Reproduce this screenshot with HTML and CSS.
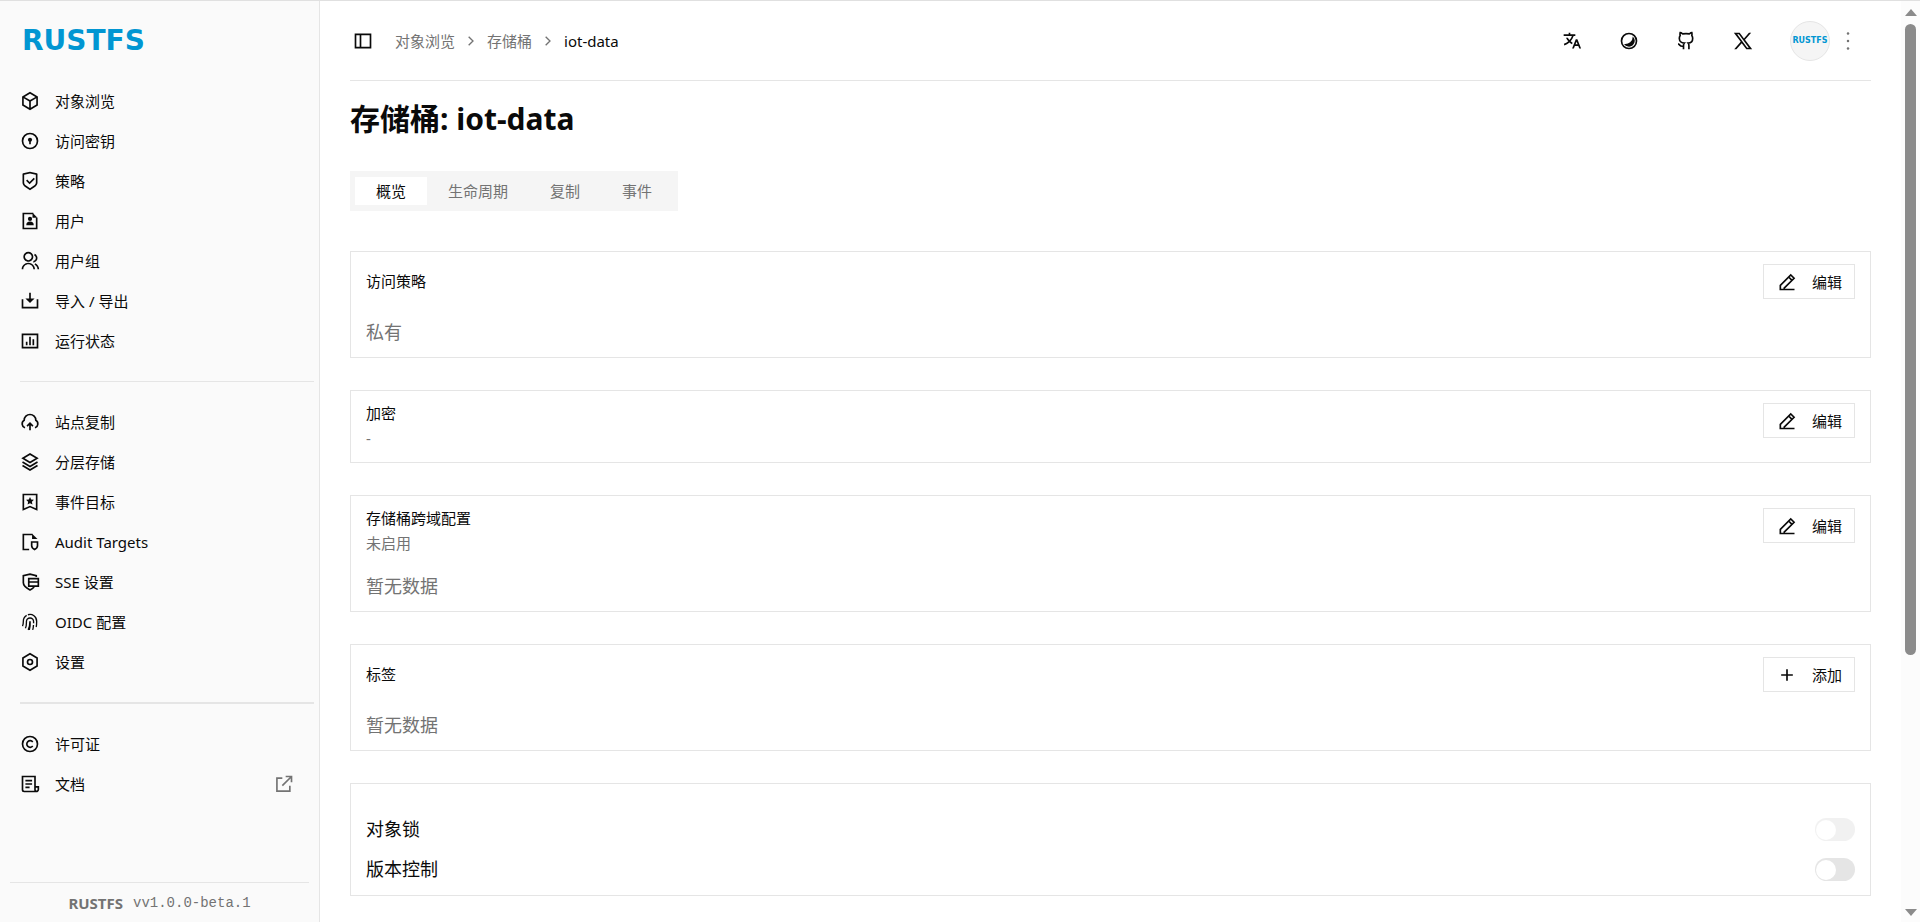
FILE: index.html
```html
<!DOCTYPE html>
<html lang="zh-CN">

<head>
    <meta charset="UTF-8">
    <meta name="viewport" content="width=device-width, initial-scale=1.0">
    <title>RustFS</title>
    <link rel="stylesheet" href="styles.css">
</head>

<body>
    <div class="app">
        <aside class="sidebar">
            <a class="logo" href="#">RUSTFS</a>

            <nav class="nav">
                <a class="nav-item" href="#">
                    <svg class="icon" viewBox="0 0 24 24"><path d="M12 1L21.5 6.5V17.5L12 23L2.5 17.5V6.5L12 1ZM5.494 7.078L12 10.844L18.506 7.078L12 3.311L5.494 7.078ZM4.5 8.813V16.347L11 20.11V12.577L4.5 8.813ZM13 20.11L19.5 16.347V8.813L13 12.577V20.11Z"/></svg>
                    对象浏览
                </a>
                <a class="nav-item" href="#">
                    <svg class="icon" viewBox="0 0 24 24"><circle class="line" cx="12" cy="12" r="9"/><circle cx="12" cy="10.5" r="2.5"/><path d="M11 11h2v5h-2Z"/></svg>
                    访问密钥
                </a>
                <a class="nav-item" href="#">
                    <svg class="icon" viewBox="0 0 24 24"><path d="M12 1L20.217 2.826C20.675 2.928 21 3.333 21 3.802V13.789C21 15.795 19.997 17.668 18.328 18.781L12 23L5.672 18.781C4.003 17.668 3 15.795 3 13.789V3.802C3 3.333 3.326 2.928 3.783 2.826L12 1ZM12 3.049L5 4.604V13.789C5 15.126 5.668 16.375 6.781 17.117L12 20.596L17.219 17.117C18.332 16.375 19 15.126 19 13.789V4.604L12 3.049ZM16.452 8.222L17.867 9.636L11.503 16L7.26 11.757L8.674 10.343L11.502 13.171L16.452 8.222Z"/></svg>
                    策略
                </a>
                <a class="nav-item" href="#">
                    <svg class="icon" viewBox="0 0 24 24"><path class="line" d="M16 3H4v18h16V8"/><path d="M15 2l6 6h-6Z"/><circle cx="12" cy="9.5" r="2.5"/><path d="M7.5 17a4.500 4.500 0 0 1 9 0Z"/></svg>
                    用户
                </a>
                <a class="nav-item" href="#">
                    <svg class="icon" viewBox="0 0 24 24"><path d="M2 22C2 17.582 5.582 14 10 14C14.418 14 18 17.582 18 22H16C16 18.686 13.314 16 10 16C6.686 16 4 18.686 4 22H2ZM10 13C6.685 13 4 10.315 4 7C4 3.685 6.685 1 10 1C13.315 1 16 3.685 16 7C16 10.315 13.315 13 10 13ZM10 11C12.21 11 14 9.21 14 7C14 4.79 12.21 3 10 3C7.79 3 6 4.79 6 7C6 9.21 7.79 11 10 11ZM18.284 14.703C21.064 15.956 23 18.752 23 22H21C21 19.564 19.548 17.467 17.463 16.527L18.284 14.703ZM17.596 3.413C19.594 4.237 21 6.204 21 8.5C21 11.37 18.804 13.725 16 13.978V11.965C17.697 11.722 19 10.264 19 8.5C19 7.119 18.202 5.926 17.041 5.356L17.596 3.413Z"/></svg>
                    用户组
                </a>
                <a class="nav-item" href="#">
                    <svg class="icon" viewBox="0 0 24 24"><path class="line" d="M3 10v10h18V10M12 2v9"/><path d="M6.500 9h11L12 14.500Z"/></svg>
                    导入 / 导出
                </a>
                <a class="nav-item" href="#">
                    <svg class="icon" viewBox="0 0 24 24"><path class="line" d="M3 4h18v16H3ZM8 13v4M12 7v10M16 10v7"/></svg>
                    运行状态
                </a>

                <hr class="nav-divider">

                <a class="nav-item" href="#">
                    <svg class="icon" viewBox="0 0 24 24"><path class="line" d="M6 19a5 5 0 0 1-1-9a7 7 0 0 1 14 0a5 5 0 0 1-1 9M12 22v-8M8.5 17L12 13.500L15.500 17"/></svg>
                    站点复制
                </a>
                <a class="nav-item" href="#">
                    <svg class="icon" viewBox="0 0 24 24"><path class="line" d="M12 2.500L20.500 7.500L12 12.500L3.500 7.500ZM3 12l9 5.300l9-5.300M3 16.300l9 5.300l9-5.300"/></svg>
                    分层存储
                </a>
                <a class="nav-item" href="#">
                    <svg class="icon" viewBox="0 0 24 24"><path class="line" d="M4 3h16v18L12 17.500L4 21Z"/><path d="M12 6l1.400 3l3.300.4l-2.400 2.300l.6 3.300L12 13.400L9.100 15l.6-3.300L7.300 9.400l3.300-.4Z"/></svg>
                    事件目标
                </a>
                <a class="nav-item" href="#">
                    <svg class="icon" viewBox="0 0 24 24"><path class="line" d="M15 3H4v18h7M14 12h7v4.500c0 2.300-1.500 3.500-3.500 4.500c-2-1-3.500-2.200-3.500-4.500Z"/><path d="M14.500 2l6.500 6.500h-6.500Z"/></svg>
                    Audit Targets
                </a>
                <a class="nav-item" href="#">
                    <svg class="icon" viewBox="0 0 24 24"><path class="line" d="M19.500 6V4.500L12 2.500L4 4.500V13c0 4 3 6 8 8.500c2-1 3.500-2 5-3.500"/><path class="line" d="M10.500 8H22v9H10.500ZM10.500 12H22"/></svg>
                    SSE 设置
                </a>
                <a class="nav-item" href="#">
                    <svg class="icon" viewBox="0 0 24 24"><path class="line line-thin" d="M3 17c1-2 1-4 1-6a8 8 0 0 1 4-7M9.500 3.300A8 8 0 0 1 20 11c0 3 0 5-.6 7M6.500 19.500c1.500-3 1.200-5.500 1.200-8a4.300 4.300 0 0 1 8.600 0v2M16.200 15.500c-.1 2-.4 4-1 6M9.800 21.500c2.200-4 2-6.500 2-10.500M12.200 11c.2 4 0 7-1 10.500"/></svg>
                    OIDC 配置
                </a>
                <a class="nav-item" href="#">
                    <svg class="icon" viewBox="0 0 24 24"><path class="line" d="M12 2.200L20.500 7.100V16.900L12 21.800L3.500 16.900V7.100Z"/><circle class="line" cx="12" cy="12" r="3"/></svg>
                    设置
                </a>

                <hr class="nav-divider nav-divider-thick">

                <a class="nav-item" href="#">
                    <svg class="icon" viewBox="0 0 24 24"><circle class="line" cx="12" cy="12" r="9"/><path class="line" d="M15.300 9.500a4 4 0 1 0 0 5"/></svg>
                    许可证
                </a>
                <a class="nav-item" href="#">
                    <svg class="icon" viewBox="0 0 24 24"><path class="line" d="M18 15V3H3v16a2 2 0 0 0 2 2h14.500a2.500 2.500 0 0 0 2.500-2.500V15.500h-4V19a2 2 0 0 0 2 2M6.500 8h8M6.500 12h8M6.500 16h5"/></svg>
                    文档
                    <svg class="icon external" viewBox="0 0 24 24"><path class="line" d="M10 5H3.500v15.500H19V14M10 14L21 3M14 3h7v7"/></svg>
                </a>
            </nav>

            <footer class="sidebar-footer">
                <strong>RUSTFS</strong>
                <code>vv1.0.0-beta.1</code>
            </footer>
        </aside>

        <main class="main">
            <header class="topbar">
                <button class="icon-button" aria-label="切换侧边栏">
                    <svg class="icon" viewBox="0 0 24 24"><path class="line" d="M3 4h18v16H3ZM9 4v16"/></svg>
                </button>
                <nav class="breadcrumb">
                    <a href="#">对象浏览</a>
                    <svg class="chevron" viewBox="0 0 24 24"><path class="line" d="M8.500 5.500L15 12L8.500 18.500"/></svg>
                    <a href="#">存储桶</a>
                    <svg class="chevron" viewBox="0 0 24 24"><path class="line" d="M8.500 5.500L15 12L8.500 18.500"/></svg>
                    <span class="current">iot-data</span>
                </nav>
                <div class="actions">
                    <button class="icon-button" aria-label="语言">
                        <svg class="icon" viewBox="0 0 24 24"><path d="M18.5 10L22.9 21H20.745L19.544 18H15.454L14.255 21H12.101L16.5 10H18.5ZM10 2V4H16V6L14.032 6C13.243 8.366 11.999 10.506 10.412 12.301C11.134 12.946 11.917 13.518 12.748 14.008L11.997 15.886C10.924 15.278 9.919 14.552 9 13.725C7.214 15.332 5.109 16.555 2.799 17.273L2.263 15.344C4.239 14.72 6.045 13.674 7.59 12.302C6.463 11.028 5.509 9.58 4.767 8H7.007C7.57 9.039 8.24 10.003 9 10.877C10.228 9.465 11.221 7.816 11.91 6H2V4H8V2H10ZM17.5 12.885L16.253 16H18.745L17.5 12.885Z"/></svg>
                    </button>
                    <button class="icon-button" aria-label="主题">
                        <svg class="icon" viewBox="0 0 24 24"><circle class="line" cx="12" cy="12" r="9"/><path d="M16.500 6.500A7 7 0 1 1 6 15.500A9 9 0 0 0 16.500 6.500Z"/></svg>
                    </button>
                    <button class="icon-button" aria-label="GitHub">
                        <svg class="icon" viewBox="0 0 24 24"><path class="line" d="M15.500 22v-4a4.800 4.800 0 0 0-1-3.500c3 0 5.500-2 5.500-5.500c.08-1.250-.27-2.480-1-3.500c.28-1.150.28-2.350 0-3.500c0 0-1 0-3 1.500c-2.640-.5-5.360-.5-8 0C6 2 5 2 5 2c-.3 1.150-.3 2.350 0 3.500A5.400 5.400 0 0 0 4 9c0 3.500 3 5.500 6 5.500c-.8 1-1.100 2.200-1 3.500v4M9 18c-4.500 1.500-4-2-6.500-2.500"/></svg>
                    </button>
                    <button class="icon-button" aria-label="X">
                        <svg class="icon" viewBox="0 0 24 24"><path d="M8 2H1L9.261 13.015L1.45 22H4.1L10.488 14.651L16 22H23L14.392 10.522L21.8 2H19.15L13.164 8.886L8 2ZM17 20L5 4H7L19 20H17Z"/></svg>
                    </button>
                    <button class="account" aria-label="账户">
                        <span class="avatar">RUSTFS</span>
                        <svg class="icon" viewBox="0 0 24 24"><circle cx="12" cy="3" r="1.500"/><circle cx="12" cy="12" r="1.500"/><circle cx="12" cy="21" r="1.500"/></svg>
                    </button>
                </div>
            </header>

            <h1>存储桶: iot-data</h1>

            <div class="tabs" role="tablist">
                <button class="tab active" role="tab" aria-selected="true">概览</button>
                <button class="tab" role="tab">生命周期</button>
                <button class="tab" role="tab">复制</button>
                <button class="tab" role="tab">事件</button>
            </div>

            <div class="cards">
                <section class="card">
                    <div class="card-header">
                        <h2>访问策略</h2>
                        <button class="button">
                            <svg class="icon" viewBox="0 0 24 24"><path class="line" d="M3 21h18M4 20v-4L16.500 3.500l4 4L8 20M14 6l4 4"/></svg>
                            编辑
                        </button>
                    </div>
                    <p class="value">私有</p>
                </section>

                <section class="card">
                    <div class="card-header">
                        <div class="card-title">
                            <h2>加密</h2>
                            <p class="description">-</p>
                        </div>
                        <button class="button">
                            <svg class="icon" viewBox="0 0 24 24"><path class="line" d="M3 21h18M4 20v-4L16.500 3.500l4 4L8 20M14 6l4 4"/></svg>
                            编辑
                        </button>
                    </div>
                </section>

                <section class="card">
                    <div class="card-header">
                        <div class="card-title">
                            <h2>存储桶跨域配置</h2>
                            <p class="description">未启用</p>
                        </div>
                        <button class="button">
                            <svg class="icon" viewBox="0 0 24 24"><path class="line" d="M3 21h18M4 20v-4L16.500 3.500l4 4L8 20M14 6l4 4"/></svg>
                            编辑
                        </button>
                    </div>
                    <p class="value">暂无数据</p>
                </section>

                <section class="card">
                    <div class="card-header">
                        <h2>标签</h2>
                        <button class="button">
                            <svg class="icon" viewBox="0 0 24 24"><path class="line" d="M12 5v14M5 12h14"/></svg>
                            添加
                        </button>
                    </div>
                    <p class="value">暂无数据</p>
                </section>

                <section class="card card-switches">
                    <div class="switch-row">
                        <label for="object-lock">对象锁</label>
                        <input class="switch" type="checkbox" role="switch" id="object-lock" disabled>
                    </div>
                    <div class="switch-row">
                        <label for="versioning">版本控制</label>
                        <input class="switch" type="checkbox" role="switch" id="versioning">
                    </div>
                </section>
            </div>
        </main>

        <div class="scrollbar" aria-hidden="true">
            <div class="arrow arrow-up"></div>
            <div class="track">
                <div class="thumb"></div>
            </div>
            <div class="arrow arrow-down"></div>
        </div>
    </div>
</body>

</html>
```

FILE: styles.css
```css
:root {
    --foreground: #0a0a0a;
    --muted: #737373;
    --muted-bg: #f5f5f5;
    --border: #e5e5e5;
    --sidebar-bg: #fafafa;
    --brand: #0196d2;
    --thumb: #8b8b8b;
}

* {
    margin: 0;
    padding: 0;
    box-sizing: border-box;
}

body {
    font-family: 'Noto Sans', 'Noto Sans CJK SC', sans-serif;
    font-size: 15px;
    line-height: 20px;
    color: var(--foreground);
    background-color: #ffffff;
    overflow: hidden;
}

a {
    color: inherit;
    text-decoration: none;
}

button {
    font: inherit;
    color: inherit;
    background: none;
    border: none;
    cursor: pointer;
}

.app {
    display: flex;
    height: 100vh;
    border-top: 1px solid #e0e0e0;
}

.icon {
    width: 20px;
    height: 20px;
    flex-shrink: 0;
    fill: currentColor;
}

.line {
    fill: none;
    stroke: currentColor;
    stroke-width: 2;
}

.line-thin {
    stroke-width: 1.6;
}

/* Sidebar */
.sidebar {
    width: 320px;
    flex-shrink: 0;
    display: flex;
    flex-direction: column;
    background-color: var(--sidebar-bg);
    border-right: 1px solid var(--border);
}

.logo {
    padding: 20px 22px;
    font-family: 'DejaVu Sans', sans-serif;
    font-size: 28px;
    font-weight: 700;
    line-height: 40px;
    color: var(--brand);
}

.nav {
    flex: 1;
}

.nav-item {
    display: flex;
    align-items: center;
    gap: 15px;
    height: 40px;
    padding: 0 25px 0 20px;
    line-height: 18px;
}

.nav-divider {
    margin: 20px 5px 20px 20px;
    border: none;
    border-top: 1px solid var(--border);
}

.nav-divider-thick {
    border-top-width: 2px;
}

.external {
    margin-left: auto;
    color: var(--muted);
}

.sidebar-footer {
    display: flex;
    align-items: center;
    justify-content: center;
    gap: 10px;
    height: 40px;
    margin: 0 10px;
    border-top: 1px solid var(--border);
    color: var(--muted);
}

.sidebar-footer code {
    font-family: 'Liberation Mono', monospace;
    font-size: 14px;
}

/* Main area */
.main {
    flex: 1;
    min-width: 0;
    padding: 0 30px;
}

.topbar {
    display: flex;
    align-items: center;
    height: 80px;
    border-bottom: 1px solid var(--border);
}

.icon-button {
    display: flex;
    align-items: center;
    justify-content: center;
    width: 25px;
    height: 35px;
}

.breadcrumb {
    display: flex;
    align-items: center;
    gap: 8px;
    margin-left: 20px;
    color: var(--muted);
}

.breadcrumb .current {
    color: var(--foreground);
}

.chevron {
    width: 16px;
    height: 16px;
}

.actions {
    display: flex;
    align-items: center;
    gap: 32px;
    margin-left: auto;
}

.account {
    display: flex;
    align-items: center;
    gap: 8px;
    margin: 0 13px 0 3px;
    color: var(--muted);
}

.avatar {
    display: flex;
    align-items: center;
    justify-content: center;
    width: 40px;
    height: 40px;
    border: 1px solid var(--border);
    border-radius: 50%;
    background-color: var(--muted-bg);
    font-family: 'DejaVu Sans', sans-serif;
    font-size: 8px;
    font-weight: 700;
    color: var(--brand);
}

h1 {
    margin: 18px 0 32px;
    font-size: 30px;
    font-weight: 700;
    line-height: 40px;
}

.tabs {
    display: inline-flex;
    align-items: center;
    height: 40px;
    padding: 0 5px;
    background-color: var(--muted-bg);
}

.tab {
    height: 28px;
    padding: 0 21px;
    color: var(--muted);
}

.tab.active {
    color: var(--foreground);
    background-color: #ffffff;
}

/* Cards */
.cards {
    display: flex;
    flex-direction: column;
    gap: 32px;
    margin-top: 40px;
}

.card {
    padding: 12px 15px;
    border: 1px solid var(--border);
}

.card-header {
    display: flex;
    align-items: flex-start;
    justify-content: space-between;
}

.card h2 {
    font-size: 15px;
    font-weight: 400;
    line-height: 35px;
}

.card-title h2 {
    line-height: 20px;
}

.description {
    margin-top: 5px;
    color: var(--muted);
}

.value {
    margin-top: 20px;
    font-size: 18px;
    line-height: 26px;
    color: var(--muted);
}

.card-title + .button {
    margin-bottom: 12px;
}

.card-header:has(.card-title) + .value {
    margin-top: 18px;
}

.button {
    display: flex;
    align-items: center;
    gap: 15px;
    height: 35px;
    padding: 0 12px 0 13px;
    border: 1px solid var(--border);
    background-color: #ffffff;
}

.card-switches {
    display: flex;
    flex-direction: column;
    gap: 17px;
    padding: 34px 15px 14px;
}

.switch-row {
    display: flex;
    align-items: center;
    justify-content: space-between;
    font-size: 18px;
    line-height: 23px;
}

.switch {
    appearance: none;
    display: flex;
    align-items: center;
    width: 40px;
    height: 23px;
    padding: 0 1px;
    border-radius: 12px;
    background-color: var(--border);
}

.switch::before {
    content: '';
    width: 20px;
    height: 20px;
    border-radius: 50%;
    background-color: #ffffff;
}

.switch:disabled {
    opacity: 0.5;
}

/* Scrollbar */
.scrollbar {
    display: flex;
    flex-direction: column;
    align-items: center;
    width: 19px;
    padding: 8px 0 6px;
    background-color: #fcfcfc;
}

.arrow {
    border: 6px solid transparent;
}

.arrow-up {
    border-top: none;
    border-bottom: 7px solid var(--thumb);
}

.arrow-down {
    border-bottom: none;
    border-top: 7px solid var(--thumb);
}

.track {
    flex: 1;
    width: 11px;
    padding: 8px 0;
}

.thumb {
    height: 72%;
    border-radius: 6px;
    background-color: var(--thumb);
}
```
